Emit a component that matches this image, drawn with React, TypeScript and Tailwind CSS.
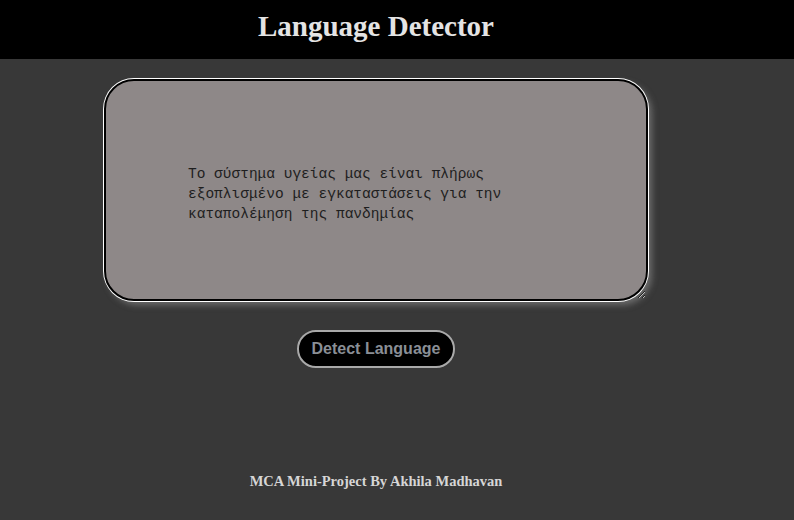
export default function App() {
  return (
    <div className="min-h-[520px] w-full bg-[#383838]">
      {/* header bar */}
      <header className="h-[59px] w-full bg-black">
        <div className="flex w-[752px] justify-center pt-[9px]">
          <h1 className="font-['Liberation_Serif',serif] text-[29px] leading-[34px] font-bold text-[#e4e4e4]">
            Language Detector
          </h1>
        </div>
      </header>

      <main className="flex w-[752px] flex-col items-center">
        <textarea
          className="mt-[20px] h-[222px] w-[544px] resize rounded-[30px] border-2 border-black bg-[#8e8888] px-[82px] pt-[83px] font-['Liberation_Mono',monospace] text-[14.5px] leading-[20px] text-[#1e1e1e] shadow-[0_0_0_1px_#ffffff,4px_4px_6px_rgba(150,150,150,0.55)] outline-none"
          defaultValue="Το σύστημα υγείας μας είναι πλήρως εξοπλισμένο με εγκαταστάσεις για την καταπολέμηση της πανδημίας"
        />

        <button className="mt-[29px] h-[38px] w-[158px] rounded-full border-2 border-[#a9a9a9] bg-black font-['Liberation_Sans',sans-serif] text-[16px] font-bold text-[#8a8f96]">
          Detect Language
        </button>

        <p className="mt-[103px] font-['Liberation_Serif',serif] text-[14.5px] font-bold text-[#d6d6d6]">
          MCA Mini-Project By Akhila Madhavan
        </p>
      </main>
    </div>
  );
}
